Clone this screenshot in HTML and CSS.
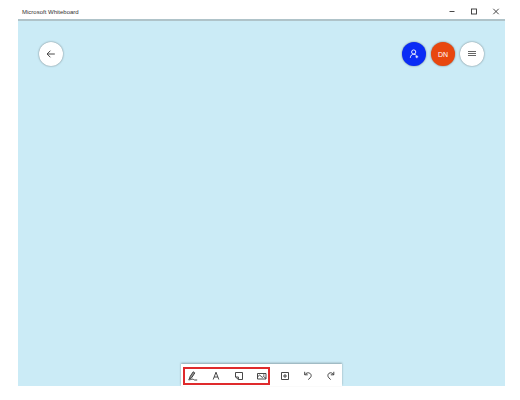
FILE: index.html
```html
<!DOCTYPE html>
<html lang="en">
<head>
<meta charset="UTF-8">
<meta name="viewport" content="width=device-width, initial-scale=1.0">
<title>Microsoft Whiteboard</title>
<link rel="stylesheet" href="styles.css">
</head>
<body>
<header class="titlebar">
    <span class="title">Microsoft Whiteboard</span>
    <div class="window-controls">
        <button type="button" aria-label="Minimize">
            <svg viewBox="0 0 12 12"><path d="M3.5 5.5h5"/></svg>
        </button>
        <button type="button" aria-label="Maximize">
            <svg viewBox="0 0 12 12"><rect x="3.5" y="3" width="5" height="5"/></svg>
        </button>
        <button type="button" aria-label="Close">
            <svg viewBox="0 0 12 12"><path d="M3.3 2.8l5.4 5.4M8.7 2.8L3.3 8.2"/></svg>
        </button>
    </div>
</header>
<main class="board">
    <nav class="top-actions">
        <button type="button" class="round" aria-label="Back">
            <svg viewBox="0 0 12 12"><path d="M2.2 6h7.6M5.4 2.7L2.1 6l3.3 3.3"/></svg>
        </button>
        <div class="user-actions">
            <button type="button" class="round invite" aria-label="Invite someone">
                <svg viewBox="0 0 12 12"><circle cx="5.7" cy="4" r="2.1"/><path d="M2.3 9.8c.2-2.3 1.6-3.6 3.4-3.6 1.1 0 2 .5 2.6 1.3M7.4 8.8h2.8M8.8 7.4v2.8"/></svg>
            </button>
            <button type="button" class="round account">DN</button>
            <button type="button" class="round" aria-label="Settings">
                <svg viewBox="0 0 12 12" class="menu"><path d="M2 3.5h8M2 5.5h8M2 7.5h8"/></svg>
            </button>
        </div>
    </nav>
    <div class="toolbar">
        <div class="tools">
            <button type="button" aria-label="Pen">
                <svg viewBox="0 0 12 12"><path d="M2.2 9.2l1-2.9 3-4.5 1.6 1.1-3 4.7z" class="nib"/><path d="M1.3 9.7c1.7.5 3.2-.7 4.6-.6 1 .1.7.9 1.7.9h2.6"/></svg>
            </button>
            <button type="button" aria-label="Text">
                <svg viewBox="0 0 12 12"><path d="M3.2 9.5L6 2.2l2.8 7.3M4.2 7h3.6"/></svg>
            </button>
            <button type="button" aria-label="Note">
                <svg viewBox="0 0 12 12"><path d="M2.5 2.5h7v7H5.4L2.5 7z"/><path d="M2.5 7h2.9v2.5"/></svg>
            </button>
            <button type="button" aria-label="Image">
                <svg viewBox="0 0 12 12"><path d="M1.5 3.5h8.5v5.500H1.500z"/><path d="M1.500 6.800l2.200-1.700 2.600 2.300 1.300-.9 2.400 1.900M7 5h1.500"/></svg>
            </button>
        </div>
        <div class="extras">
            <button type="button" aria-label="Insert">
                <svg viewBox="0 0 12 12"><path d="M2.5 2.5h7v7h-7zM6 4v4M4 6h4"/></svg>
            </button>
            <button type="button" aria-label="Undo">
                <svg viewBox="0 0 12 12"><path d="M2.7 1.8v3h3"/><path d="M2.8 4.7C4 3 6.1 2.2 7.8 3.200c1.800 1.100 1.700 3.300.4 4.600L6.200 9.600"/></svg>
            </button>
            <button type="button" aria-label="Redo">
                <svg viewBox="0 0 12 12"><path d="M8.8 1.800v3h-3"/><path d="M8.700 4.700C7.600 3 5.700 2.200 4.100 3.200c-1.600 1.100-1.500 3.300-.3 4.600L5.700 9.600"/></svg>
            </button>
        </div>
    </div>
</main>
</body>
</html>
```
FILE: styles.css
```css
* {
    box-sizing: border-box;
}
body {
    display: flex;
    flex-direction: column;
    min-height: 100vh;
    margin: 0;
    padding: 0 15px 14px 18px;
    background: #fff;
    color: #333;
    font-family: "Liberation Sans", Arial, sans-serif;
}
button {
    display: flex;
    align-items: center;
    justify-content: center;
    width: 12px;
    height: 12px;
    padding: 0;
    border: none;
    background: none;
    color: inherit;
    font-family: inherit;
}
svg {
    width: 12px;
    height: 12px;
    fill: none;
    stroke: currentColor;
    stroke-width: 0.9;
}
.titlebar {
    display: flex;
    align-items: center;
    justify-content: space-between;
    height: 19px;
    padding: 4px 3px 0 4px;
}
.title {
    font-size: 6px;
    line-height: 12px;
}
.window-controls {
    display: flex;
    gap: 10px;
}
.board {
    display: flex;
    flex: 1;
    flex-direction: column;
    align-items: center;
    justify-content: space-between;
    border-top: 2px solid #afc3c9;
    background: #cbebf6;
}
.top-actions {
    display: flex;
    justify-content: space-between;
    width: 100%;
    padding: 21px 21px 0;
}
.user-actions {
    display: flex;
    gap: 5px;
}
.round {
    width: 24px;
    height: 24px;
    border-radius: 50%;
    background: #fff;
    box-shadow: 0 0 2px rgba(0, 0, 0, 0.5);
}
.invite {
    background: #0a2cf5;
    color: #fff;
}
.account {
    background: #e8470f;
    color: #fff;
    font-size: 7px;
}
.menu {
    stroke-width: 1;
    color: #666;
}
.toolbar {
    display: flex;
    align-items: center;
    gap: 9px;
    height: 22px;
    padding: 1px 5px 0 2px;
    background: #fff;
    box-shadow: 0 -1px 2px rgba(0, 0, 0, 0.3);
}
.tools,
.extras {
    display: flex;
    align-items: center;
    gap: 11px;
}
.tools {
    height: 18px;
    padding-left: 2px;
    border: 2px solid #df2a2c;
}
.nib {
    fill: #999;
}
```
